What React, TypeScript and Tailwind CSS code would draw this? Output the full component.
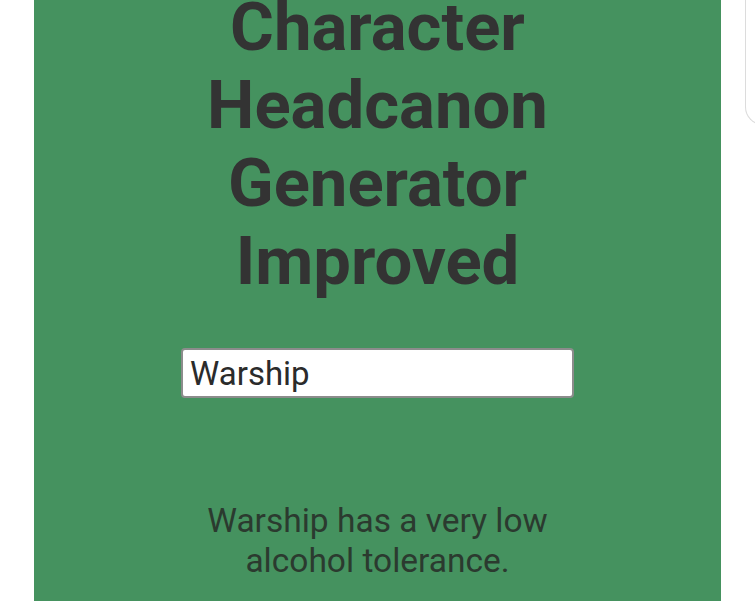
import { useState } from "react";

const font = { fontFamily: "Roboto, 'Noto Sans', sans-serif" };

export default function App() {
  const [name, setName] = useState("Warship");

  return (
    <div className="relative h-[601px] overflow-hidden bg-white" style={font}>
      {/* device edge panel peeking in on the right */}
      <div className="absolute left-[745px] top-[-20px] w-[40px] h-[145px] border-l border-b border-[#dcdcdc] rounded-bl-[18px]" />

      <div className="mx-auto w-[687px] h-full bg-[#45925f] flex flex-col items-center">
        <h1 className="mt-[-12px] text-center text-[67px] leading-[78px] font-bold text-[#333333] w-[420px]">
          Character Headcanon Generator Improved
        </h1>

        <input
          value={name}
          onChange={(e) => setName(e.target.value)}
          className="mt-[48px] w-[393px] h-[50px] bg-white border-2 border-[#8c8c8c] rounded-[4px] px-[7px] text-[33px] text-[#2b2b2b] outline-none"
          style={font}
        />

        <p className="mt-[103px] w-[393px] text-center text-[33.5px] leading-[40px] text-[#2b3a2f]">
          {name} has a very low alcohol tolerance.
        </p>
      </div>
    </div>
  );
}
